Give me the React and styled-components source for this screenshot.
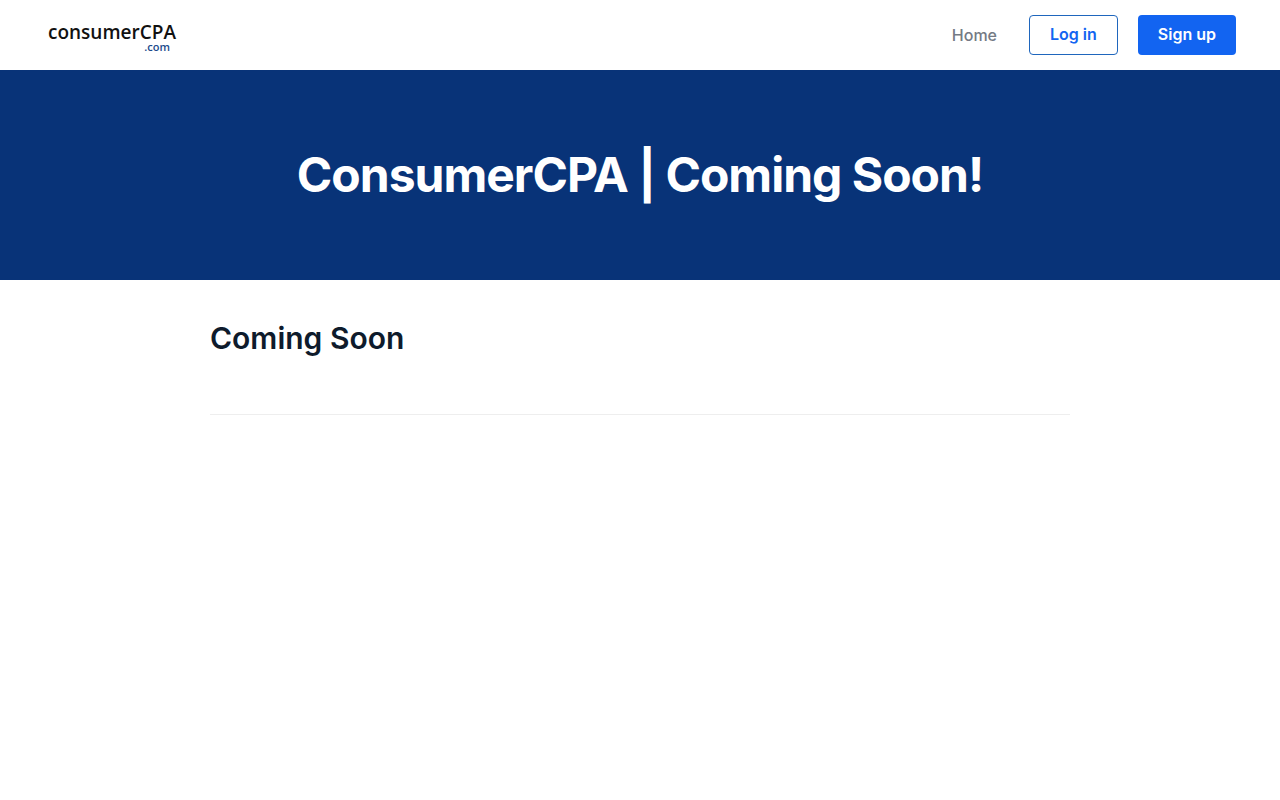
import React from "react";
import styled, { createGlobalStyle, css } from "styled-components";

const GlobalStyle = createGlobalStyle`
  *, *::before, *::after { box-sizing: border-box; }
  body {
    margin: 0;
    background: #ffffff;
    color: #081c30;
    font-family: Inter, "Liberation Sans", sans-serif;
  }
`;

const Header = styled.header`
  display: flex;
  align-items: center;
  justify-content: space-between;
  min-height: 70px;
  padding: 0 44px 0 48px;
  background: #ffffff;
`;

const Logo = styled.a`
  display: flex;
  flex-direction: column;
  padding-top: 4px;
  color: #111111;
  font-family: "Open Sans", "Noto Sans", sans-serif;
  font-size: 19px;
  font-weight: 600;
  line-height: 20px;
  text-decoration: none;
`;

const LogoSuffix = styled.span`
  align-self: flex-end;
  padding-right: 6px;
  color: #1c4b8c;
  font-size: 11px;
  font-weight: 600;
  line-height: 10px;
`;

const Nav = styled.nav`
  display: flex;
  align-items: center;
`;

const NavLink = styled.a`
  margin-right: 32px;
  color: #747a84;
  font-size: 16px;
  font-weight: 500;
  line-height: 24px;
  text-decoration: none;
`;

const Actions = styled.div`
  display: flex;
  gap: 20px;
`;

const Button = styled.button`
  height: 40px;
  padding: 0 20px 2px;
  border: 1px solid #1f66bd;
  border-radius: 4px;
  background: #ffffff;
  color: #1264f1;
  font: 600 16px/24px Inter, "Liberation Sans", sans-serif;
  cursor: pointer;
  ${({ $primary }) =>
    $primary &&
    css`
      border: 0;
      background: #1264f1;
      color: #ffffff;
    `}
`;

const Hero = styled.section`
  display: flex;
  align-items: center;
  justify-content: center;
  min-height: 210px;
  padding: 0 20px;
  background: #083378;
`;

const HeroTitle = styled.h1`
  margin: 0;
  color: #ffffff;
  font-size: 48px;
  font-weight: 700;
  line-height: 60px;
  letter-spacing: -1px;
  text-align: center;
`;

const Content = styled.main`
  max-width: 900px;
  margin: 0 auto;
  padding: 40px 20px;
`;

const SectionTitle = styled.h2`
  margin: 0;
  padding-bottom: 58px;
  border-bottom: 1px solid #eeeeee;
  color: #0e1b2c;
  font-size: 30px;
  font-weight: 600;
  line-height: 36px;
`;

export default function App() {
  return (
    <>
      <GlobalStyle />
      <Header>
        <Logo href="#">
          consumerCPA
          <LogoSuffix>.com</LogoSuffix>
        </Logo>
        <Nav>
          <NavLink href="#">Home</NavLink>
          <Actions>
            <Button type="button">Log in</Button>
            <Button type="button" $primary>Sign up</Button>
          </Actions>
        </Nav>
      </Header>
      <Hero>
        <HeroTitle>ConsumerCPA | Coming Soon!</HeroTitle>
      </Hero>
      <Content>
        <SectionTitle>Coming Soon</SectionTitle>
      </Content>
    </>
  );
}
